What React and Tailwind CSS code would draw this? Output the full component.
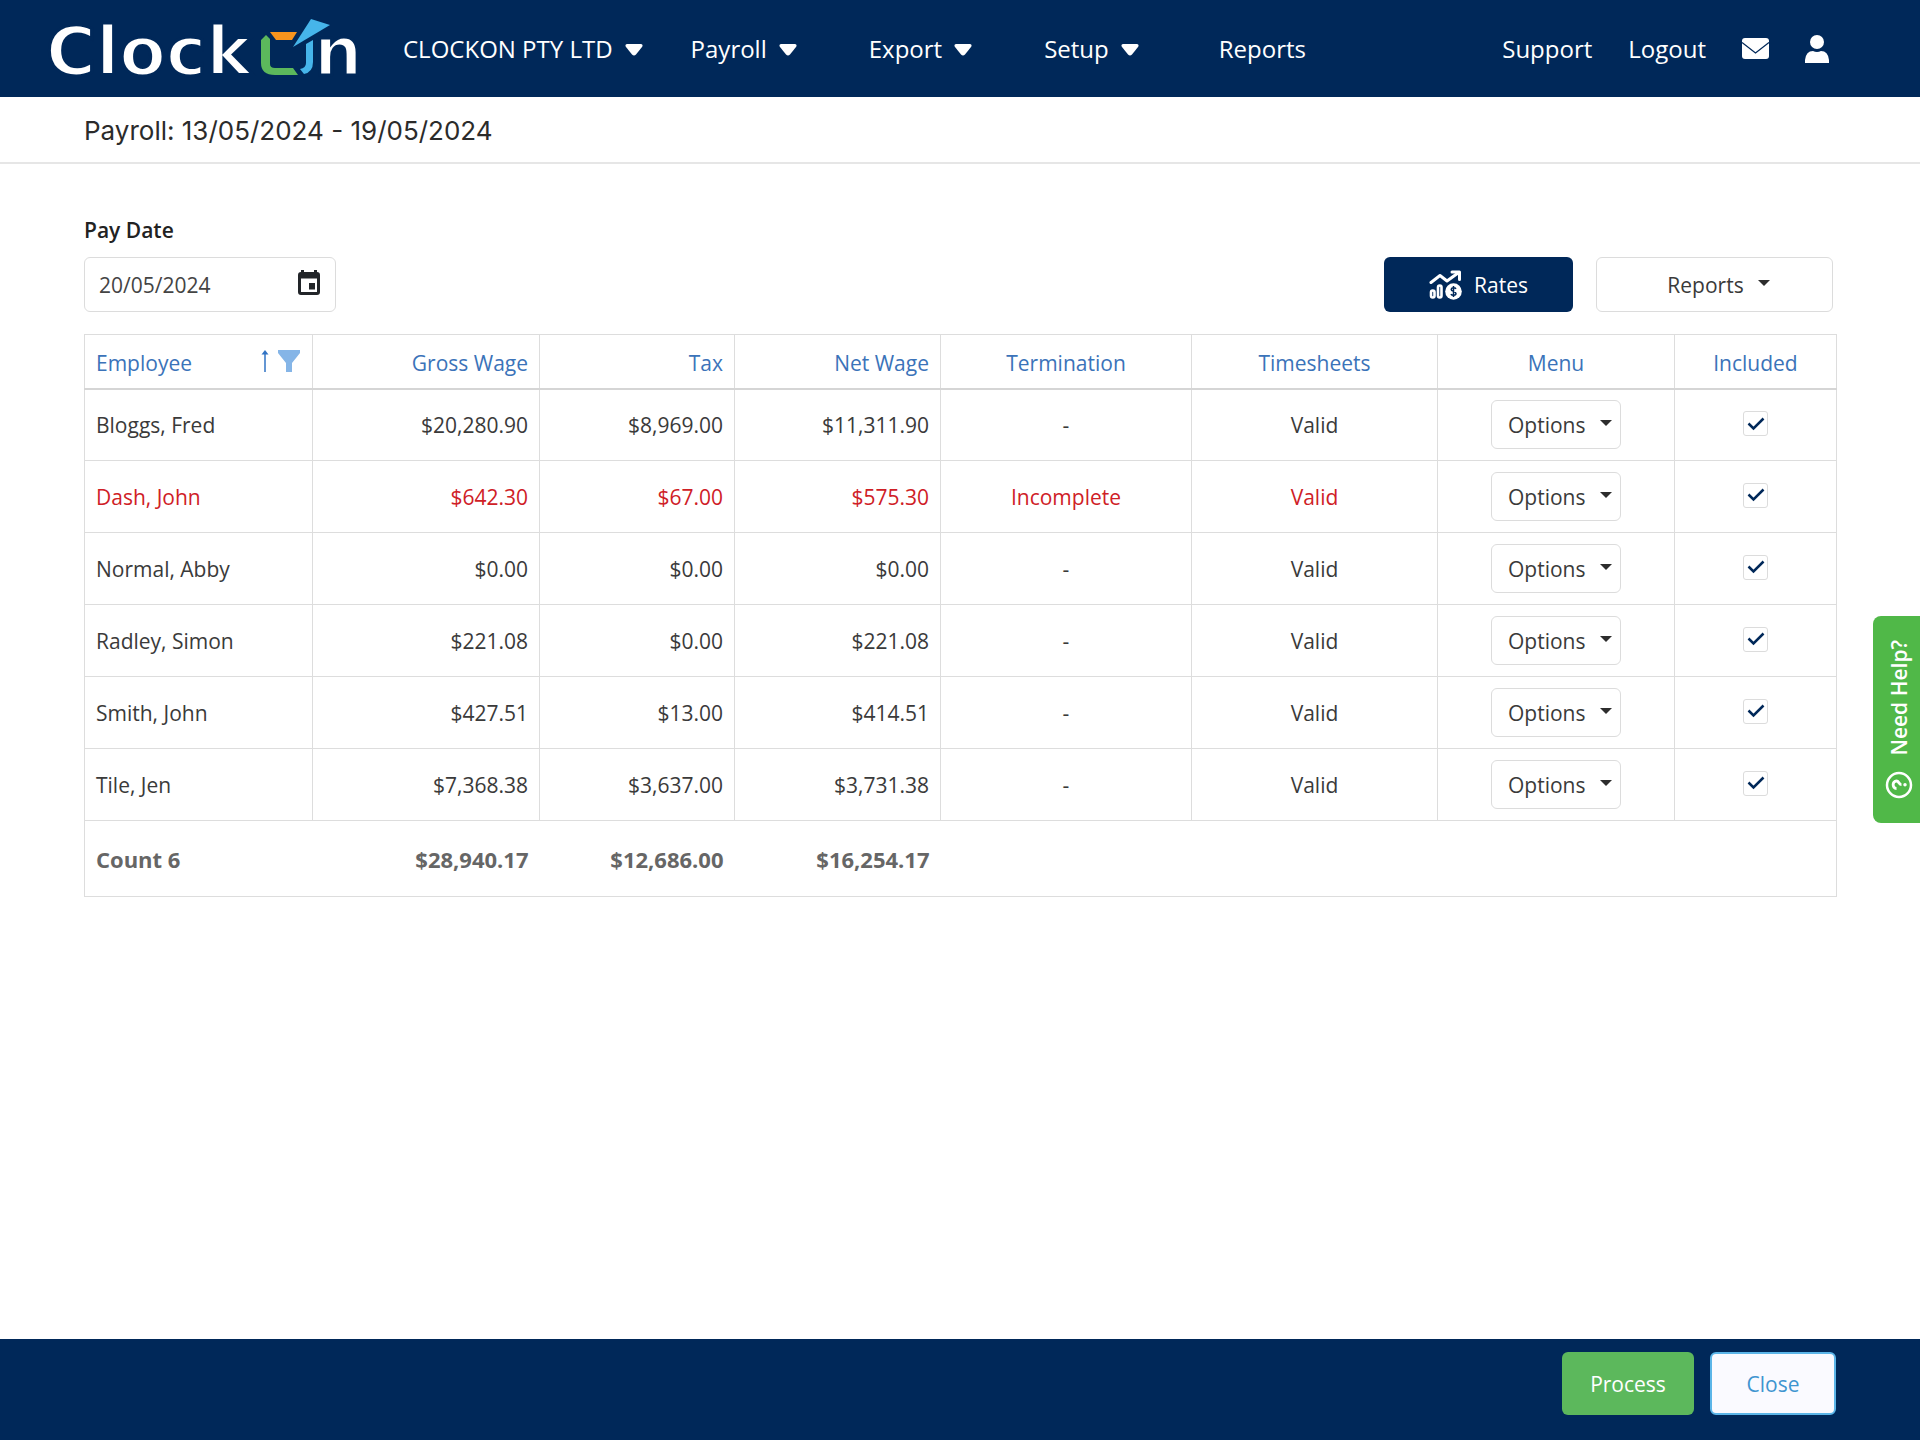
import React from 'react';

const columns = [
  { title: 'Employee', width: 'w-[228px]', align: 'text-left' },
  { title: 'Gross Wage', width: 'w-[227px]', align: 'text-right' },
  { title: 'Tax', width: 'w-[195px]', align: 'text-right' },
  { title: 'Net Wage', width: 'w-[206px]', align: 'text-right' },
  { title: 'Termination', width: 'w-[251px]', align: 'text-center' },
  { title: 'Timesheets', width: 'w-[246px]', align: 'text-center' },
  { title: 'Menu', width: 'w-[237px]', align: 'text-center' },
  { title: 'Included', width: 'w-[162px]', align: 'text-center' },
];

const employees = [
  { name: 'Bloggs, Fred', gross: '$20,280.90', tax: '$8,969.00', net: '$11,311.90', termination: '-', timesheets: 'Valid' },
  { name: 'Dash, John', gross: '$642.30', tax: '$67.00', net: '$575.30', termination: 'Incomplete', timesheets: 'Valid', error: true },
  { name: 'Normal, Abby', gross: '$0.00', tax: '$0.00', net: '$0.00', termination: '-', timesheets: 'Valid' },
  { name: 'Radley, Simon', gross: '$221.08', tax: '$0.00', net: '$221.08', termination: '-', timesheets: 'Valid' },
  { name: 'Smith, John', gross: '$427.51', tax: '$13.00', net: '$414.51', termination: '-', timesheets: 'Valid' },
  { name: 'Tile, Jen', gross: '$7,368.38', tax: '$3,637.00', net: '$3,731.38', termination: '-', timesheets: 'Valid' },
];

const Logo = () => (
  <svg viewBox="0 -14 318 88" className="h-[88px] w-[318px] shrink-0 overflow-visible" role="img" aria-label="ClockOn">
    <g fontFamily="DejaVu Sans" fontWeight="700" fontSize="68" fill="#fff" stroke="#002859" strokeWidth="3">
      <text x="-3" y="56">Clock</text>
      <text x="265" y="56">n</text>
    </g>
    <path d="M212 21 L217 16 L221 20 L221 45 Q221 49 226 49 L244 49 L249 56 L226 56 Q212 56 212 44 Z" fill="#5cb85c" />
    <path d="M221 13 L248 13 L243 21 L227 21 Z" fill="#f7941d" />
    <path d="M262 0 L281 6 L244 28 Z" fill="#46b5ea" />
    <path d="M257 25 L264 21 L264 43 Q264 53 255 55 L251 50 Q257 49 257 44 Z" fill="#46b5ea" />
  </svg>
);

const NavCaret = () => (
  <svg viewBox="0 0 18 12" className="mt-[2px] h-3 w-[18px]" fill="currentColor">
    <path d="M2 0 H16 Q18.500 .5 17 3 L11 10.500 Q9 12.500 7 10.500 L1 3 Q-.5 .5 2 0 Z" />
  </svg>
);

const Caret = () => (
  <svg viewBox="0 0 12 6" className="mb-[3px] h-[6px] w-3" fill="#2d2d2d">
    <path d="M0 0 H12 L6 6 Z" />
  </svg>
);

const RatesIcon = () => (
  <svg viewBox="0 0 33 30" className="h-[30px] w-[33px]" fill="none" stroke="#fff">
    <path d="M2 12.500 L11 5.500 L18 11 L29 3" strokeWidth="3" strokeLinecap="round" strokeLinejoin="round" />
    <path d="M23 2 H30.500 V9.500" strokeWidth="3" strokeLinecap="round" strokeLinejoin="round" />
    <rect x="2" y="20.500" width="3.500" height="7" rx="1.700" strokeWidth="2.600" />
    <rect x="9" y="15.500" width="3.500" height="12" rx="1.700" strokeWidth="2.600" />
    <circle cx="24.500" cy="21.500" r="8.300" fill="#fff" stroke="none" />
    <path d="M27 18.800 C26 17.200 22.200 17.300 22.200 19.500 C22.200 21.800 27 21 27 23.500 C27 25.800 23 25.900 21.900 24.200 M24.500 16 V27" stroke="#002859" strokeWidth="1.500" />
  </svg>
);

const CalendarIcon = () => (
  <svg viewBox="0 0 24 26" className="h-[26px] w-6" fill="#222529">
    <path d="M4 0 H7 V2 H17 V0 H20 V2 Q23 2 23 5 V22 Q23 25 20 25 H4 Q1 25 1 22 V5 Q1 2 4 2 Z M4 8.500 V22 H20 V8.500 Z" fillRule="evenodd" />
    <path d="M12 13 H18 V19.500 H12 Z" />
  </svg>
);

const SortArrow = () => (
  <svg viewBox="0 0 8 22" className="h-[22px] w-2">
    <path d="M4 2 V22" stroke="#3173c4" strokeWidth="1.500" />
    <path d="M4 0 L7.500 4.500 H.5 Z" fill="#3173c4" />
  </svg>
);

const FilterIcon = () => (
  <svg viewBox="0 0 24 22" className="h-[22px] w-6" fill="#85b5e7">
    <path d="M1 0 H23 V3 L15 13 V22 H9 V13 L1 3 Z" />
  </svg>
);

const MailIcon = () => (
  <svg viewBox="0 0 27 21" className="h-[21px] w-[27px]">
    <rect width="27" height="21" rx="3" fill="#fff" />
    <path d="M0 4.500 L13.500 15 L27 4.500" fill="none" stroke="#002859" strokeWidth="1.300" />
  </svg>
);

const UserIcon = () => (
  <svg viewBox="0 0 24 28" className="h-7 w-6" fill="#fff">
    <circle cx="12" cy="7" r="7" />
    <path d="M0 28 V25 Q1 16 8 16 Q12 18 16 16 Q23 16 24 25 V28 Z" />
  </svg>
);

const HelpIcon = () => (
  <svg viewBox="0 0 28 28" className="h-7 w-7 -rotate-90" fill="none" stroke="#fff">
    <circle cx="14" cy="14" r="12" strokeWidth="2.500" />
    <path d="M10.500 11.500 C10.500 7 18 7 18 11.500 C18 14 14.300 14 14.300 16.500" strokeWidth="2.800" />
    <circle cx="14.300" cy="20" r="1" strokeWidth="1.500" fill="#fff" />
  </svg>
);

const NavMenu = ({ label }) => (
  <button type="button" aria-haspopup="menu" className="flex items-center gap-3 whitespace-nowrap">
    {label}
    <NavCaret />
  </button>
);

const Header = () => (
  <header className="flex h-[97px] items-center bg-[#002859] pr-[91px] pl-[49px] text-2xl text-white">
    <Logo />
    <nav className="ml-9 flex flex-1 items-center">
      <NavMenu label="CLOCKON PTY LTD" />
      <div className="ml-12 flex items-center gap-[72px]">
        <NavMenu label="Payroll" />
        <NavMenu label="Export" />
        <NavMenu label="Setup" />
        <a href="#reports" className="pl-2">Reports</a>
      </div>
      <div className="ml-auto flex items-center gap-9">
        <a href="#support">Support</a>
        <a href="#logout">Logout</a>
        <a href="#messages" aria-label="Messages"><MailIcon /></a>
        <a href="#account" aria-label="Account"><UserIcon /></a>
      </div>
    </nav>
  </header>
);

const IncludedCheckbox = ({ name }) => (
  <span className="inline-grid place-items-center align-middle">
    <input
      type="checkbox"
      defaultChecked
      aria-label={`Include ${name}`}
      className="peer col-start-1 row-start-1 h-[25px] w-[25px] appearance-none rounded-[3px] border border-[#dcdcdc] bg-white"
    />
    <svg viewBox="0 0 18 14" className="pointer-events-none invisible col-start-1 row-start-1 h-[14px] w-[18px] peer-checked:visible">
      <path d="M1.500 6.500 L6.500 11.500 L16.500 1.500" fill="none" stroke="#002859" strokeWidth="2.500" />
    </svg>
  </span>
);

const PayrollTable = () => (
  <table className="mt-[22px] w-full table-fixed border-collapse border border-[#dddddd] text-[#3a3a3a]">
    <thead>
      <tr className="h-[54px] border-b-2 border-[#d5d5d5] text-[#3b73b9]">
        {columns.map((c) => (
          <th key={c.title} scope="col" className={`${c.width} ${c.align} border-x border-[#dddddd] px-[11px] pt-1 font-normal`}>
            {c.title === 'Employee' ? (
              <div className="flex items-center justify-between">
                {c.title}
                <span className="flex items-center gap-2 pb-1">
                  <SortArrow />
                  <FilterIcon />
                </span>
              </div>
            ) : (
              c.title
            )}
          </th>
        ))}
      </tr>
    </thead>
    <tbody>
      {employees.map((e) => (
        <tr key={e.name} className={`h-[72px] border-b border-[#dddddd] ${e.error ? 'text-[#cf2026]' : ''}`}>
          <td className="border-x border-[#dddddd] px-[11px]">{e.name}</td>
          <td className="border-x border-[#dddddd] px-[11px] text-right">{e.gross}</td>
          <td className="border-x border-[#dddddd] px-[11px] text-right">{e.tax}</td>
          <td className="border-x border-[#dddddd] px-[11px] text-right">{e.net}</td>
          <td className="border-x border-[#dddddd] px-[11px] text-center">{e.termination}</td>
          <td className="border-x border-[#dddddd] px-[11px] text-center">{e.timesheets}</td>
          <td className="border-x border-[#dddddd] text-center">
            <button
              type="button"
              aria-haspopup="menu"
              className="inline-flex h-[49px] w-[130px] items-center justify-between rounded-md border border-[#dcdcdc] pr-2 pl-4 align-middle text-[#3a3a3a]"
            >
              Options
              <Caret />
            </button>
          </td>
          <td className="border-x border-[#dddddd] pb-[6px] text-center">
            <IncludedCheckbox name={e.name} />
          </td>
        </tr>
      ))}
    </tbody>
    <tfoot>
      <tr className="h-[76px] text-[22px] font-bold text-[#666666]">
        <td className="px-[11px]">Count 6</td>
        <td className="px-[11px] text-right">$28,940.17</td>
        <td className="px-[11px] text-right">$12,686.00</td>
        <td className="px-[11px] text-right">$16,254.17</td>
        <td colSpan={4} />
      </tr>
    </tfoot>
  </table>
);

export default function App() {
  return (
    <div className="flex min-h-screen flex-col bg-white font-['Open_Sans',sans-serif] text-[21px] leading-7 text-[#3a3a3a]">
      <Header />

      <div className="flex h-[67px] items-center border-b-2 border-[#e6e6e6] px-[84px] pt-[2px]">
        <h1 className="font-['Inter',sans-serif] text-[26px] text-[#2b2b2b]">Payroll: 13/05/2024 - 19/05/2024</h1>
      </div>

      <main className="flex-1 px-[84px] pt-[52px]">
        <div className="flex items-end justify-between pr-[3px]">
          <div>
            <label htmlFor="pay-date" className="block font-semibold text-[#222222]">Pay Date</label>
            <div className="mt-[13px] flex h-[55px] w-[252px] items-center rounded-md border border-[#dcdcdc] pr-[14px] pl-[14px]">
              <input id="pay-date" type="text" defaultValue="20/05/2024" className="w-full min-w-0 flex-1 text-[#444444] outline-none" />
              <button type="button" aria-label="Open calendar" className="pb-1">
                <CalendarIcon />
              </button>
            </div>
          </div>
          <div className="flex gap-[23px]">
            <button type="button" className="flex h-[55px] w-[189px] items-center justify-center gap-3 rounded-md bg-[#002859] text-white">
              <RatesIcon />
              Rates
            </button>
            <button type="button" aria-haspopup="menu" className="flex h-[55px] w-[237px] items-center justify-center gap-[14px] rounded-md border border-[#dcdcdc] pl-2">
              Reports
              <Caret />
            </button>
          </div>
        </div>

        <PayrollTable />
      </main>

      <footer className="flex h-[101px] items-start justify-end gap-4 bg-[#002859] px-[84px] pt-[13px]">
        <button type="button" className="h-[63px] w-[132px] rounded-md bg-[#5cb85c] text-white">Process</button>
        <button type="button" className="h-[63px] w-[126px] rounded-md border-2 border-[#5bb5e8] bg-[#fafaff] text-[#3f95d0]">Close</button>
      </footer>

      {/* help tab pinned to the right edge */}
      <button
        type="button"
        className="fixed top-[616px] right-0 flex h-[207px] w-[47px] flex-col items-center justify-center gap-4 rounded-l-lg bg-[#50b848] pl-1 font-semibold text-white"
      >
        <span className="rotate-180 [writing-mode:vertical-rl]">Need Help?</span>
        <HelpIcon />
      </button>
    </div>
  );
}
